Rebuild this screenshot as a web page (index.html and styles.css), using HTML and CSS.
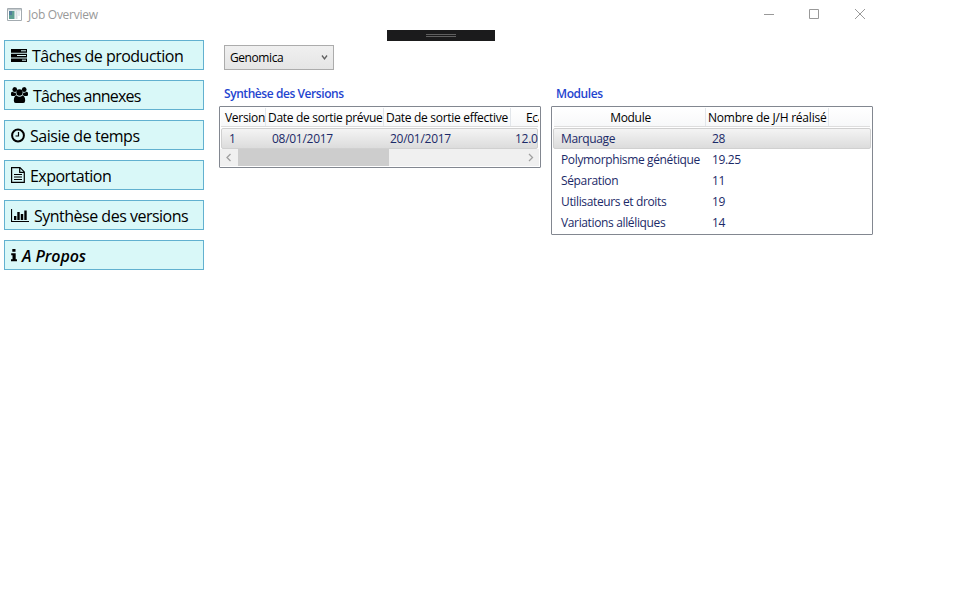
FILE: index.html
```html
<!DOCTYPE html>
<html lang="fr">
<head>
<meta charset="utf-8">
<title>Job Overview</title>
<link rel="stylesheet" href="styles.css">
</head>
<body>
<div class="window">
  <header class="titlebar">
    <svg class="app-icon" width="15" height="13" viewBox="0 0 15 13"><path fill="#fff" stroke="#a3abb0" d="M.5.5h14v12H.5z"/><path fill="#c5cbce" d="M1 1h13v1.500H1z"/><path fill="#5f9f92" d="M2 3h5.500v8H2z"/><path fill="#527f9c" d="M2 3h3v4H2z"/><path fill="#d6dce0" d="M8.500 3h2v8h-2z"/><path fill="#e9eef1" d="M11 3h2v5h-2z"/></svg>
    <span class="title">Job Overview</span>
    <svg class="caption" width="104" height="12" viewBox="0 0 104 12" fill="none" stroke="#999"><path d="M0 6.500h10M45.500 1.500h9v9h-9z"/><path d="M91 1l10 10M101 1L91 11"/></svg>
  </header>
  <div class="debug-bar"><span class="grip"></span></div>
  <div class="body">
    <nav class="menu">
      <button><svg width="16" height="15" viewBox="0 0 16 15"><path d="M0 1h16v3.700H0zM0 5.700h16v3.700H0zM0 10.400h16V14H0z"/><path stroke="#d9f8f8" d="M10 2.800h5M6 7.500h9M11 12.200h4"/></svg><span class="l1">Tâches de production</span></button>
      <button><svg width="17" height="16" viewBox="0 0 18 16" preserveAspectRatio="none"><circle cx="4" cy="2.500" r="2.500"/><circle cx="14" cy="2.500" r="2.500"/><path d="M0 8V6.500Q0 4.500 1.500 4.700Q4 6 5 5.500Q5 7.500 6 8.300Q4.500 8.200 3.700 9H1.500Q0 9 0 8zM18 8V6.500Q18 4.500 16.500 4.700Q14 6 13 5.500Q13 7.500 12 8.300Q13.500 8.200 14.300 9h2.200Q18 9 18 8z"/><circle cx="9" cy="5.500" r="3.300"/><path d="M5.800 8.400Q9 11 12.200 8.400Q15 9 15 13.500Q15 16 13 16H5Q3 16 3 13.500Q3 9 5.800 8.400z"/></svg><span class="l2">Tâches annexes</span></button>
      <button><svg width="14" height="15" viewBox="0 0 14 15"><circle cx="7" cy="7.500" r="5.900" fill="none" stroke="#000" stroke-width="2"/><path fill="none" stroke="#000" stroke-width="1.200" d="M7.500 4v4H4.500"/></svg><span class="l3">Saisie de temps</span></button>
      <button><svg width="14" height="16" viewBox="0 0 14 16"><path fill="none" stroke="#000" stroke-width="1.200" d="M.6.600h8.400l4.300 4.300v10.500H.6zM8.700.6v4.700h4.600"/><path stroke="#000" stroke-width="1.100" d="M3 7.500h8M3 10h8M3 12.500h8"/></svg><span class="l4">Exportation</span></button>
      <button><svg width="18" height="15" viewBox="0 0 18 15"><path d="M0 1h1.100v12H18v1.100H0zM3 8h2.400v4H3zM6.300 4h2.400v8H6.300zM9.800 6h2.400v6H9.800zM13.300 2.500h2.400V12h-2.400z"/></svg><span class="l5">Synthèse des versions</span></button>
      <button><svg width="6" height="15" viewBox="0 0 6 15"><path d="M1.300 1h3.200v2.700H1.300zM.2 5.200h4.500v6H6v2H0v-2h1.500v-4H.2z"/></svg><span class="l6">A Propos</span></button>
    </nav>
    <main class="content">
      <div class="combo"><span>Genomica</span><svg width="7" height="6" viewBox="0 0 7 6"><path fill="none" stroke="#606060" stroke-width="1.300" d="M1 .5l2.500 3.500L6 .5"/></svg></div>
      <div class="panels">
        <section>
          <h2 class="h-versions">Synthèse des Versions</h2>
          <div class="list versions">
            <div class="row head"><span class="t1">Version</span><span class="t2">Date de sortie prévue</span><span class="t3">Date de sortie effective</span><span class="t4">Eca</span></div>
            <div class="row selected"><span>1</span><span>08/01/2017</span><span>20/01/2017</span><span>12.0</span></div>
            <div class="scroll"><svg width="17" height="17" viewBox="0 0 17 17"><path d="M10.500 5L7 8.500l3.500 3.500"/></svg><span class="track"><span class="thumb"></span></span><svg width="17" height="17" viewBox="0 0 17 17"><path d="M7 5l3.500 3.500L7 12"/></svg></div>
          </div>
        </section>
        <section>
          <h2 class="h-modules">Modules</h2>
          <div class="list modules">
            <div class="row head"><span>Module</span><span class="t5">Nombre de J/H réalisé</span></div>
            <div class="row selected"><span class="m1">Marquage</span><span>28</span></div>
            <div class="row"><span class="m2">Polymorphisme génétique</span><span>19.25</span></div>
            <div class="row"><span class="m3">Séparation</span><span>11</span></div>
            <div class="row"><span class="m4">Utilisateurs et droits</span><span>19</span></div>
            <div class="row"><span class="m5">Variations alléliques</span><span>14</span></div>
          </div>
        </section>
      </div>
    </main>
  </div>
</div>
</body>
</html>
```
FILE: styles.css
```css
* { box-sizing: border-box; }
body { margin: 0; background: #fff; font: 12px/16px "Open Sans", "Noto Sans", sans-serif; color: #000; }
.window { width: 877px; height: 590px; }
.titlebar { height: 30px; display: flex; align-items: center; padding: 0 9px 2px 7px; color: #999; }
.title { margin-left: 6px; flex: 1; padding-top: 2px; letter-spacing: -.27px; }
.debug-bar { width: 108px; height: 11px; margin-left: 387px; background: #1b1b1c; display: flex; align-items: center; justify-content: center; }
.grip { width: 30px; height: 3px; border: solid #606060; border-width: 1px 0; }
.body { display: flex; margin-top: -1px; padding-left: 4px; }
.menu { width: 200px; display: grid; gap: 10px; align-content: start; }
.menu button { height: 30px; border: 1px solid #62b1d0; background: #d9f8f8; padding: 2px 0 0 6px; display: flex; align-items: center; font: 16px/24px "Open Sans", "Noto Sans", sans-serif; color: #000; text-align: left; white-space: nowrap; }
.menu svg { flex: none; margin-top: -2px; margin-right: 5px; }
.menu .l1 { letter-spacing: -.5px; }
.menu .l2 { letter-spacing: -.77px; }
.menu .l3 { letter-spacing: -.45px; }
.menu .l4 { letter-spacing: -.52px; }
.menu .l5 { letter-spacing: -.5px; }
.menu .l6 { letter-spacing: -.08px; font-weight: 600; font-style: italic; }
.content { margin-left: 15px; padding-top: 5px; }
.combo { width: 110px; height: 25px; margin-left: 5px; border: 1px solid #acacac; background: linear-gradient(#f0f0f0, #e5e5e5); display: flex; align-items: center; justify-content: space-between; padding: 0 5px; letter-spacing: -.42px; }
.panels { display: flex; gap: 10px; align-items: flex-start; }
h2 { margin: 16px 0 4px 5px; font-size: 12px; line-height: 16px; font-weight: 600; color: #1f45cf; letter-spacing: -.43px; }
.list { width: 322px; border: 1px solid #828790; padding: 1px; overflow: hidden; border-radius: 1px; }
.versions { height: 62px; padding-left: 0; }
.modules { height: 129px; }
.row { display: grid; height: 21px; border: 1px solid transparent; border-radius: 2px; align-items: center; color: #1b2a68; letter-spacing: -.36px; white-space: nowrap; }
.versions .row { grid-template-columns: 44px 118px 127px 30px; }
.modules .row { grid-template-columns: 151px 1fr; }
.row span { padding-left: 7px; }
.row.head { height: 19px; margin: 0 1px 1px; color: #000; border-width: 0 0 1px; border-color: #ddd; background: linear-gradient(#fff, #f7f8f9); border-radius: 0; letter-spacing: -.3px; }
.versions .row.head { grid-template-columns: 45px 118px 127px 28px; }
.head span { border-right: 1px solid #e2e6ea; padding: 2px 0 0 2px; overflow: hidden; }
.head .t1 { padding-left: 4px; }
.head .t2 { padding-left: 2px; }
.head .t5 { letter-spacing: -.22px; }
.modules .row.head { grid-template-columns: 152px 123px 1fr; }
.modules .head span:first-child { text-align: center; }
.head .t4 { padding-left: 15px; border-right: 0; }
.row.selected { border-color: #d0d0d0; background: linear-gradient(#f4f4f4, #dcdcdc); }
.versions .row.selected { margin-left: 1px; margin-right: 1px; grid-template-columns: 43px 118px 127px 28px; letter-spacing: -.28px; }
.versions .row.selected span:nth-child(4) { padding-left: 5px; overflow: hidden; }
.scroll { display: flex; height: 17px; background: #f0f0f0; }
.scroll svg { flex: none; fill: none; stroke: #a0a0a0; stroke-width: 1.300; }
.track { flex: 1; display: flex; }
.thumb { width: 151px; margin-left: 1px; background: #cdcdcd; }
```
